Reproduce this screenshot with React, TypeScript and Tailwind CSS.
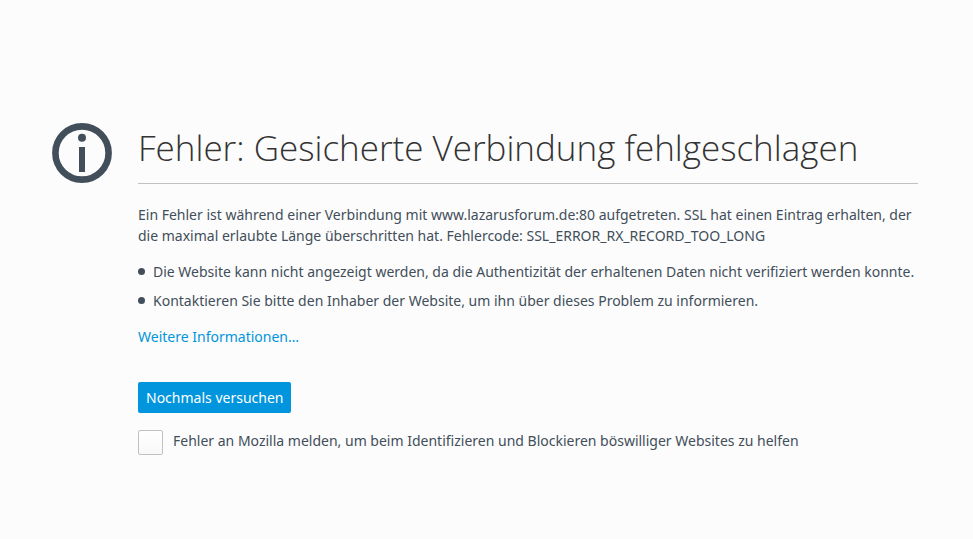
const hints = [
  "Die Website kann nicht angezeigt werden, da die Authentizität der erhaltenen Daten nicht verifiziert werden konnte.",
  "Kontaktieren Sie bitte den Inhaber der Website, um ihn über dieses Problem zu informieren.",
];

function InfoIcon() {
  return (
    <svg viewBox="0 0 60 60" className="size-[60px] shrink-0" aria-hidden="true">
      <circle cx="30" cy="30" r="26.6" fill="none" stroke="#424f5a" strokeWidth="6.6" />
      <circle cx="30" cy="14.7" r="4" fill="#424f5a" />
      <rect x="27" y="24" width="6" height="25" fill="#424f5a" />
    </svg>
  );
}

export default function App() {
  return (
    <main className="flex min-h-screen justify-center bg-[#fcfcfc] pt-[123px] pr-[55px] pl-[52px] font-['Noto_Sans','Open_Sans',sans-serif] text-[14px] leading-[21px] text-[#424e5a]">
      <div className="flex w-full max-w-[866px] items-start gap-[26px]">
        <InfoIcon />
        <div className="min-w-0 flex-1">
          <h1 className="border-b border-[#c1c1c1] pb-[10px] font-['Open_Sans','Noto_Sans',sans-serif] text-[35px] leading-[50px] font-light text-[#333333]">
            Fehler: Gesicherte Verbindung fehlgeschlagen
          </h1>
          <p className="mt-5">
            Ein Fehler ist während einer Verbindung mit www.lazarusforum.de:80 aufgetreten. SSL hat einen Eintrag erhalten, der
            die maximal erlaubte Länge überschritten hat. Fehlercode: SSL_ERROR_RX_RECORD_TOO_LONG
          </p>
          <ul className="mt-[15px] flex flex-col gap-2">
            {hints.map((hint) => (
              <li key={hint} className="flex items-start gap-2">
                <span className="mt-[7px] size-[7px] shrink-0 rounded-full bg-[#424e5a]" />
                <span>{hint}</span>
              </li>
            ))}
          </ul>
          <a href="#details" className="mt-[15px] inline-block text-[#0095dd]">
            Weitere Informationen…
          </a>
          <div className="mt-[35px]">
            <button type="button" className="h-[31px] rounded-xs bg-[#0095dd] px-2 text-white">
              Nochmals versuchen
            </button>
          </div>
          <label className="mt-[17px] flex items-start gap-[10px]">
            <input
              type="checkbox"
              className="size-[25px] shrink-0 appearance-none rounded-xs border border-[#c1c1c1] bg-linear-to-b from-white to-[#f8f8f8]"
            />
            <span>Fehler an Mozilla melden, um beim Identifizieren und Blockieren böswilliger Websites zu helfen</span>
          </label>
        </div>
      </div>
    </main>
  );
}
